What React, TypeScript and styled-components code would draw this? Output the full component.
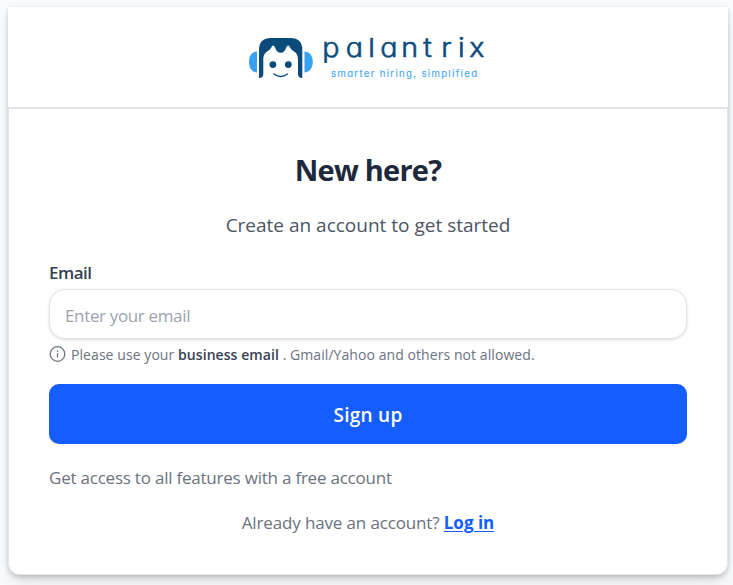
import React from "react";
import styled, { createGlobalStyle } from "styled-components";

const GlobalStyle = createGlobalStyle`
  * { box-sizing: border-box; }
  body {
    margin: 0;
    background: #f8fafc;
    font-family: "Open Sans", "Noto Sans", sans-serif;
    overflow: hidden;
  }
`;

const Page = styled.main`
  height: 585px;
  padding: 7px 5px 0 8px;
`;

const Shell = styled.div`
  display: flex;
  flex-direction: column;
  height: 568px;
  border-radius: 0 0 12px 12px;
  box-shadow: 0 10px 15px -3px rgba(0, 0, 0, 0.1), 0 2px 5px rgba(0, 0, 0, 0.2);
`;

const Header = styled.header`
  display: flex;
  justify-content: center;
  height: 100px;
  padding-top: 25px;
  background: #fff;
`;

const Card = styled.section`
  flex: 1;
  display: flex;
  flex-direction: column;
  padding: 38px 40px 0;
  background: #fff;
  border: 1px solid #e2e5e9;
  border-top-width: 2px;
  border-radius: 0 0 12px 12px;
`;

const Title = styled.h1`
  margin: 0;
  height: 46px;
  line-height: 46px;
  text-align: center;
  font-size: 29px;
  font-weight: 700;
  letter-spacing: -0.75px;
  color: #1e293b;
`;

const Subtitle = styled.p`
  margin: 17px 0 0;
  line-height: 30px;
  text-align: center;
  font-size: 19px;
  color: #4b5563;
`;

const Label = styled.label`
  margin-top: 21px;
  line-height: 24px;
  font-size: 17px;
  font-weight: 600;
  letter-spacing: -0.5px;
  color: #374151;
`;

const Input = styled.input`
  width: 100%;
  height: 50px;
  margin-top: 4px;
  padding: 2px 15px 0;
  border: 1px solid #e2e4e8;
  border-radius: 16px;
  background: #fff;
  box-shadow: 0 1px 3px rgba(0, 0, 0, 0.14);
  font: 400 17px "Open Sans", sans-serif;
  letter-spacing: -0.35px;
  outline: none;
  &::placeholder { color: #9ca3af; opacity: 1; }
`;

const Hint = styled.div`
  display: flex;
  align-items: center;
  gap: 5px;
  height: 22px;
  margin-top: 4px;
  font-size: 14px;
  letter-spacing: 0.07px;
  white-space: pre;
  color: #6b7280;
`;

const Strong = styled.strong`
  font-weight: 600;
  color: #374151;
`;

const SubmitButton = styled.button`
  height: 60px;
  margin-top: 19px;
  padding: 2px 0 0;
  border: 0;
  border-radius: 10px;
  background: #155dfc;
  color: #fff;
  font: 600 19px "Open Sans", sans-serif;
  letter-spacing: 0.25px;
`;

const Note = styled.p<{ $centered?: boolean }>`
  margin: ${(p) => (p.$centered ? "17px 0 0" : "20px 0 0")};
  line-height: 28px;
  font-size: 17px;
  letter-spacing: ${(p) => (p.$centered ? "-0.14px" : "-0.22px")};
  text-align: ${(p) => (p.$centered ? "center" : "left")};
  color: #6b7280;
`;

const LoginLink = styled.a`
  color: #155dfc;
  font-weight: 700;
  letter-spacing: 0;
  text-decoration: underline;
  text-decoration-thickness: 1px;
  text-underline-offset: 2px;
`;

const Wordmark = styled.text`
  font-family: "Inter", sans-serif;
  font-feature-settings: "cv11" 1;
  font-size: 26px;
  font-weight: 300;
  fill: #0b4b7c;
  stroke: #0b4b7c;
  stroke-width: 0.6px;
  stroke-linejoin: round;
`;

const Tagline = styled.text`
  font-family: "Inter", sans-serif;
  font-feature-settings: "cv11" 1;
  font-size: 9.6px;
  fill: #3ea6f4;
  stroke: #3ea6f4;
  stroke-width: 0.1px;
`;

const WORDMARK_STRETCH = 1.1;
const WORDMARK_X = [322.3, 345.8, 368.2, 380.3, 401.2, 423.2, 441.2, 458, 469.3]
  .map((x) => (x / WORDMARK_STRETCH).toFixed(2))
  .join(" ");

const Logo = () => (
  <svg width="240" height="54" viewBox="248 32 240 54" role="img" aria-label="palantrix">
    <path d="M257 51.500c-5 .2-8 4.300-8 10.300s3 10.500 8 10.700Z" fill="#38a1f1" />
    <path d="M304.500 51.500c5 .2 8.300 4.300 8.300 10.300s-3.300 10.500-8.300 10.700Z" fill="#38a1f1" />
    <path
      d="M259 78V50Q259 38 271 38H290.500Q302.300 38 302.300 50V78Q298 78 298 74V60C298 54 295.500 52.500 293 50.800C290.500 49 290 47.500 289.300 46.300C288.300 44.800 286.800 45.800 286 48Q284.500 52.800 280.700 52.800Q276.800 52.800 275.300 48C274.500 45.800 273 44.800 272 46.300C271.300 47.500 270.800 49 268.300 50.800C265.800 52.500 263.300 54 263.300 60V74Q263.300 78 259 78Z"
      fill="#0b4b7c"
    />
    <circle cx="272.900" cy="64.600" r="3.400" fill="#0b4b7c" />
    <circle cx="288.300" cy="64.600" r="3.400" fill="#0b4b7c" />
    <path d="M274 74Q280.700 78.800 287.500 74" fill="none" stroke="#0b4b7c" strokeWidth="1.500" strokeLinecap="round" />
    <Wordmark y="57.500" x={WORDMARK_X} transform={`scale(${WORDMARK_STRETCH} 1)`}>palantrix</Wordmark>
    <Tagline x="331" y="76.500" textLength="146">smarter hiring, simplified</Tagline>
  </svg>
);

const InfoIcon = () => (
  <svg width="17" height="17" viewBox="0 0 17 17" fill="none" stroke="#6b7280" strokeWidth="1.300">
    <circle cx="8.500" cy="8" r="7.300" />
    <path d="M8.500 7.200V11.500M8.500 4.300V5.700" />
  </svg>
);

export default function App() {
  return (
    <>
      <GlobalStyle />
      <Page>
        <Shell>
          <Header>
            <Logo />
          </Header>
          <Card>
            <Title>New here?</Title>
            <Subtitle>Create an account to get started</Subtitle>
            <Label htmlFor="email">Email</Label>
            <Input id="email" type="email" placeholder="Enter your email" />
            <Hint>
              <InfoIcon />
              <span>
                Please use your <Strong>business email</Strong> . Gmail/Yahoo and others not allowed.
              </span>
            </Hint>
            <SubmitButton type="button">Sign up</SubmitButton>
            <Note>Get access to all features with a free account</Note>
            <Note $centered>
              Already have an account? <LoginLink>Log in</LoginLink>
            </Note>
          </Card>
        </Shell>
      </Page>
    </>
  );
}
